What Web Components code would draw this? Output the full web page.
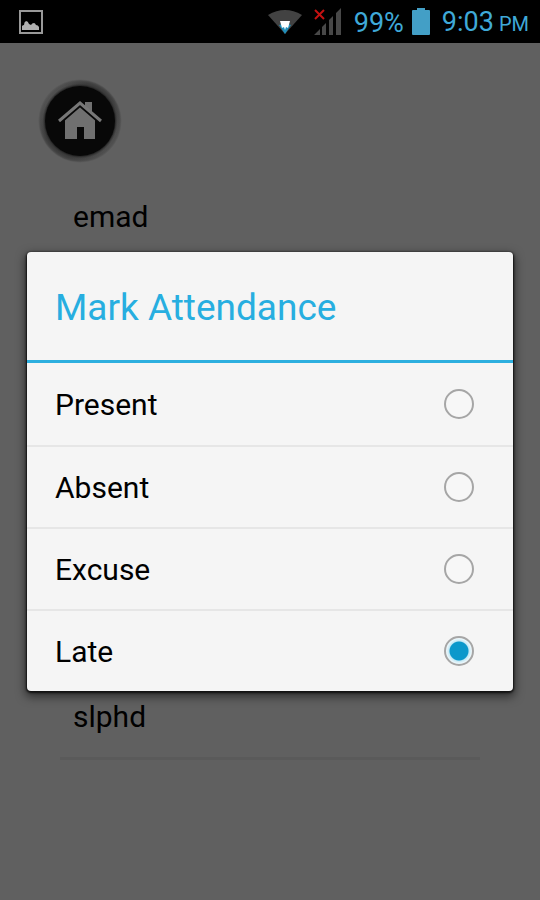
<!DOCTYPE html>
<html lang="en">
<head>
<meta charset="utf-8">
<meta name="viewport" content="width=device-width, initial-scale=1">
<title>Mark Attendance</title>
<style>
  html, body { height: 100%; margin: 0; }
  body { background: #606060; color: #000; font-family: Roboto, "Noto Sans", sans-serif; }
</style>
</head>
<body>
<attendance-app></attendance-app>
<script>
const define = (name, html, setup) => {
  const template = document.createElement('template');
  template.innerHTML = html;
  customElements.define(name, class extends HTMLElement {
    constructor() {
      super();
      this.attachShadow({ mode: 'open' }).append(template.content.cloneNode(true));
    }
    connectedCallback() { if (setup) setup(this, this.shadowRoot); }
  });
};

define('status-bar', `
  <style>
    :host { display: flex; align-items: center; justify-content: space-between; height: 43px; padding: 0 11px 0 19px; background: #000; color: #3fa9d8; }
    .right { display: flex; align-items: center; }
    svg { display: block; }
    .signal { margin-left: 12px; }
    .percent, .time { padding-top: 3px; font-size: 27px; line-height: 32px; white-space: nowrap; }
    .percent { margin-left: 12px; }
    .battery { margin-left: 8px; }
    .time { margin-left: 12px; }
    small { font-size: 20px; margin-left: 5px; }
  </style>
  <svg width="24" height="24" viewBox="0 0 24 24" aria-label="Picture saved">
    <rect x="1" y="1" width="22" height="22" fill="none" stroke="#999" stroke-width="2"/>
    <path d="M3 20v-4q1-1 2-1 0-3 2-4 2 0 3 3l2 1q1-2 3-2 1 0 2 2 2 0 3 2v3z" fill="#b0b0b0"/>
  </svg>
  <div class="right">
    <svg width="34" height="26" viewBox="0 0 34 26" aria-label="Wi-Fi">
      <path d="M0 6Q17-4 34 6L17 25z" fill="#424242"/>
      <path d="M11 16q6-3 12 0l-6 9z" fill="#1f8fbb"/>
      <path d="M12 12h10l-2 7-2-1-1 3-1-3-2 1z" fill="#fff"/>
    </svg>
    <svg class="signal" width="28" height="28" viewBox="0 0 28 28" aria-label="No signal">
      <path d="M0 27l6-6v6zM8 19l4-4v12H8zM15 12l4-4v19h-4zM22 5l5-5v27h-5z" fill="#484848"/>
      <path d="M1 2l9 9M10 2l-9 9" stroke="#c41111" stroke-width="2"/>
    </svg>
    <span class="percent">99%</span>
    <svg class="battery" width="18" height="27" viewBox="0 0 18 27" aria-label="Battery">
      <path d="M5 0h8v2h4q1 0 1 1v23q0 1-1 1H1q-1 0-1-1V3q0-1 1-1h4z" fill="#439fc6"/>
    </svg>
    <span class="time">9:03<small>PM</small></span>
  </div>`);

define('home-button', `
  <style>
    :host { display: block; }
    button { display: block; padding: 0; border: 0; border-radius: 50%; background: none; }
    svg { display: block; }
  </style>
  <button type="button" aria-label="Home">
    <svg width="84" height="84" viewBox="0 0 84 84">
      <defs>
        <linearGradient id="ring" x1=".1" y1=".2" x2=".9" y2=".8">
          <stop offset="0" stop-color="#585858"/><stop offset=".3" stop-color="#3c3c3c"/>
          <stop offset=".65" stop-color="#3c3c3c"/><stop offset="1" stop-color="#545454"/>
        </linearGradient>
        <radialGradient id="soft">
          <stop offset=".84" stop-color="#202020" stop-opacity=".8"/>
          <stop offset=".9" stop-color="#404040" stop-opacity=".2"/>
          <stop offset="1" stop-color="#606060"/>
        </radialGradient>
      </defs>
      <circle cx="42" cy="42" r="41" fill="url(#ring)"/>
      <circle cx="42" cy="42" r="42" fill="url(#soft)"/>
      <circle cx="42" cy="42" r="35" fill="#080808"/>
      <path d="M27 40l15-13 15 13v20H46V48h-7v12H27z" fill="#707070"/>
      <path d="M20 44l22-19 22 19" fill="none" stroke="#080808" stroke-width="5"/>
      <path d="M47 23h7v11l-7-6z" fill="#707070"/>
      <path d="M21 42l21-18 21 18" fill="none" stroke="#777" stroke-width="3"/>
    </svg>
  </button>`);

define('student-row', `
  <style>
    :host { display: flex; align-items: center; height: 80px; padding: 0 13px; border-bottom: 3px solid #5a5a5a; font-size: 30px; line-height: 36px; }
  </style>
  <slot></slot>`);

define('attendance-option', `
  <style>
    :host { display: block; }
    :host(:not(:first-of-type)) label { border-top: 2px solid #e6e6e6; }
    label { display: flex; align-items: center; justify-content: space-between; box-sizing: border-box; height: 82px; padding: 0 39px 0 28px; font-size: 30px; line-height: 36px; }
    span { padding-top: 2px; }
    input { appearance: none; box-sizing: border-box; width: 30px; height: 30px; margin: 0; border: 2px solid #a6a6a6; border-radius: 50%; background: #f7f7f7; }
    input:checked { background: radial-gradient(circle, #0c98cb 9px, #c5e8f4 10px, #e4f5fb 12px, #f2f7f9 13px); }
  </style>
  <label><span><slot></slot></span><input type="radio" name="attendance"></label>`,
  (host, root) => {
    const input = root.querySelector('input');
    input.checked = host.hasAttribute('checked');
    input.addEventListener('change', () => {
      for (const other of host.parentElement.querySelectorAll('attendance-option'))
        if (other !== host) other.shadowRoot.querySelector('input').checked = false;
    });
  });

define('choice-dialog', `
  <style>
    :host { display: block; border-radius: 4px; background: #f5f5f5; box-shadow: 0 1px 2px 1px #111, 0 4px 10px 2px rgba(0, 0, 0, .5); }
    h1 { display: flex; align-items: center; box-sizing: border-box; height: 111px; margin: 0; padding: 4px 28px 0; border-bottom: 3px solid #2dafdf; color: #27aee0; font-size: 37px; line-height: 46px; font-weight: 400; }
  </style>
  <h1><slot name="title"></slot></h1>
  <slot></slot>`);

define('attendance-app', `
  <style>
    :host { display: flex; flex-direction: column; min-height: 100%; }
    main { position: relative; flex: 1; }
    home-button { padding: 36px 0 0 38px; }
    .students { display: flex; flex-direction: column; justify-content: space-between; height: 583px; margin: 14px 60px 0; }
    .overlay { position: absolute; inset: 0; display: flex; align-items: center; padding: 0 5%; }
    choice-dialog { flex: 1; }
  </style>
  <status-bar></status-bar>
  <main>
    <home-button></home-button>
    <div class="students">
      <student-row>emad</student-row>
      <student-row>slphd</student-row>
    </div>
    <div class="overlay">
      <choice-dialog role="dialog" aria-label="Mark Attendance">
        <span slot="title">Mark Attendance</span>
        <attendance-option>Present</attendance-option>
        <attendance-option>Absent</attendance-option>
        <attendance-option>Excuse</attendance-option>
        <attendance-option checked>Late</attendance-option>
      </choice-dialog>
    </div>
  </main>`);
</script>
</body>
</html>
